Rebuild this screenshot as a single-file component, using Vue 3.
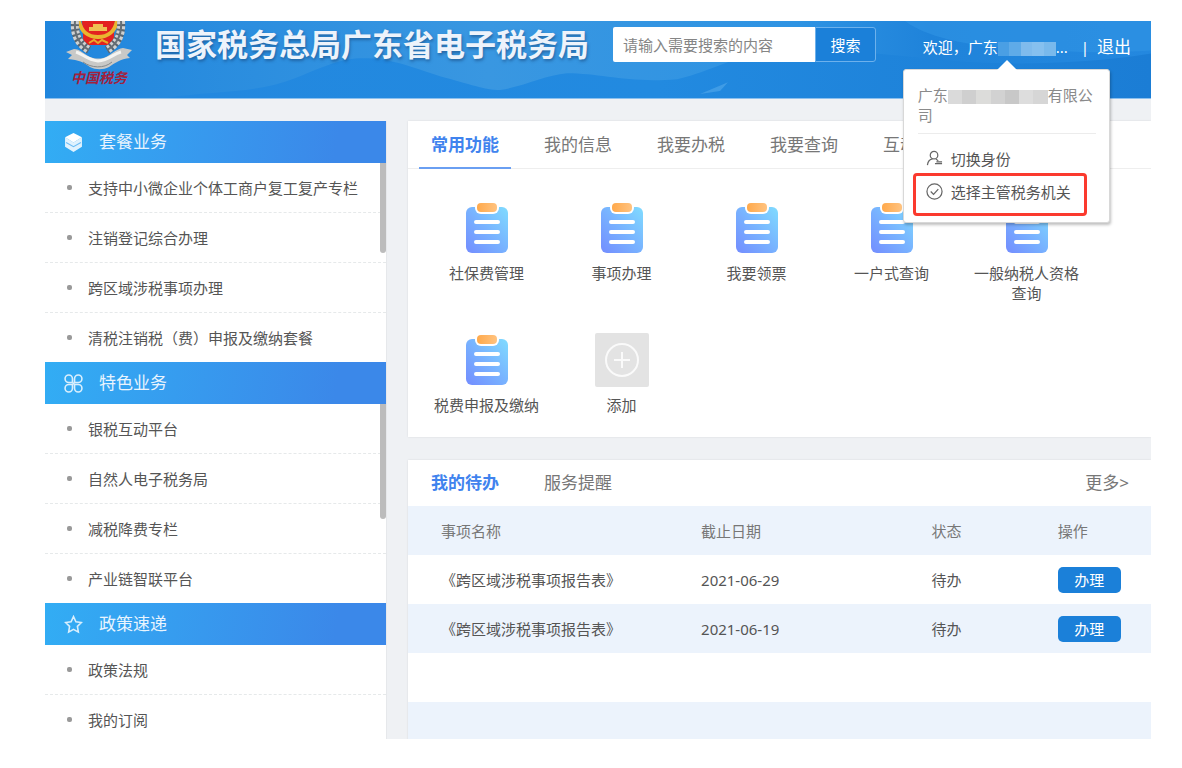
<template>
  <div class="page">
    <div class="portal">
      <header class="header">
        <svg class="header-bg" viewBox="0 0 1106 78" preserveAspectRatio="none" aria-hidden="true">
          <defs>
            <linearGradient id="sky" x1="0" y1="0" x2="1" y2="0">
              <stop offset="0" stop-color="#2086dd" />
              <stop offset="0.4" stop-color="#3997e1" />
              <stop offset="0.68" stop-color="#2e93e3" />
              <stop offset="0.8" stop-color="#1f83da" />
              <stop offset="1" stop-color="#2488df" />
            </linearGradient>
            <linearGradient id="ridge" x1="0" y1="0" x2="1" y2="0">
              <stop offset="0" stop-color="#2388df" />
              <stop offset="0.5" stop-color="#228ae0" />
              <stop offset="1" stop-color="#1b7dd5" />
            </linearGradient>
          </defs>
          <rect width="1106" height="78" fill="url(#sky)" />
          <path d="M860 0h246v30c-60 4-90 0-130-2s-90-8-116-28z" fill="#3094e4" opacity=".6" />
          <path d="M120 78c50-8 90-4 130-20 20-8 40-18 60-20 30-2 50 6 85 18 30 8 45 14 60 14 25-4 45-15 67-17 35 0 60 10 110 6 40-10 50-22 90-26 60-6 110 0 170 6s140 6 214-6v45z" fill="url(#ridge)" />
          <path d="M655 74l28-12-8 9z" fill="#5eafee" opacity=".5" />
        </svg>
        <div class="brand">
          <svg class="emblem" viewBox="0 0 68 49" aria-hidden="true">
            <path d="M17 0h33l-1 15c0 6-2 9-4 9H22c-3 0-4-4-4-9z" fill="#e3211f" />
            <path d="M14 0c2 10 9 16 19 16s17-6 19-16" fill="none" stroke="#e9b52f" stroke-width="4" />
            <path d="M24 10v-4h4v-3h10v3h4v4z" fill="#efc052" />
            <path d="M24 22l5-3 4 3 4-3 6 3" fill="none" stroke="#e9a92a" stroke-width="2" />
            <path d="M10 0c-1 12 2 22 14 29M56 0c1 12-2 22-14 29" fill="none" stroke="#5a6670" stroke-width="8" />
            <path d="M10 0c-1 12 2 22 14 29M56 0c1 12-2 22-14 29" fill="none" stroke="#cfd1d1" stroke-width="8" stroke-dasharray="3 2" />
            <path d="M10 0c-1 12 2 22 14 29M56 0c1 12-2 22-14 29" fill="none" stroke="#666f75" stroke-width="2" />
            <path d="M1 31l8-3c6 0 10 5 16 8 6 2 11 2 16 0 6-3 10-8 17-9l9 2-5 5 3 3c-10 1-15 5-21 9-6 3-13 3-19 0-7-5-11-7-22-8l4-4z" fill="#c9c9c7" />
            <path d="M11 31c7 2 11 8 22 9 11-1 15-7 23-9" fill="none" stroke="#f4f4f2" stroke-width="3" />
            <path d="M18 41c8 6 21 7 29 0" fill="none" stroke="#85898b" stroke-width="1" />
          </svg>
          <span class="brand-name">中国税务</span>
        </div>
        <h1 class="title">国家税务总局广东省电子税务局</h1>
        <form class="search" @submit.prevent>
          <input v-model="keyword" type="text" placeholder="请输入需要搜索的内容" aria-label="搜索内容" />
          <button type="submit">搜索</button>
        </form>
        <div class="user">
          <div class="account">
            <button class="account-btn" type="button" @click="menuOpen = !menuOpen">
              欢迎，广东<span class="mask mask-blue"><i v-for="c in blueMask" :key="c" :style="{ background: c }"></i></span>...
            </button>
            <div v-show="menuOpen" class="dropdown">
              <p class="company">广东<span class="mask mask-gray"><i v-for="c in grayMask" :key="c" :style="{ background: c }"></i></span>有限公司</p>
              <ul class="menu">
                <li>
                  <button type="button">
                    <svg viewBox="0 0 18 18" aria-hidden="true">
                      <circle cx="8.5" cy="5.5" r="4" />
                      <path d="M1.500 16c.5-4 2.500-6 5.500-6.500M10.500 9.500l2.500 2M9.500 14.500h7.500M11 12.500h6" />
                    </svg>
                    切换身份
                  </button>
                </li>
                <li class="marked">
                  <button type="button">
                    <svg viewBox="0 0 18 18" aria-hidden="true">
                      <circle cx="9" cy="9" r="8" />
                      <path d="M5 9l3 3 5-5.500" />
                    </svg>
                    选择主管税务机关
                  </button>
                </li>
              </ul>
            </div>
          </div>
          <span class="bar">|</span>
          <a class="logout" href="#">退出</a>
        </div>
      </header>

      <div class="body">
        <aside class="sidebar">
          <section v-for="group in groups" :key="group.title" class="group">
            <h2>
              <svg v-if="group.icon === 'cube'" viewBox="0 0 18 18" aria-hidden="true">
                <path d="M9 0l8 4-8 5-8-5z" fill="#fff" />
                <path d="M1 4l8 5 8-5v9l-8 5-8-5z" fill="#fff" opacity=".85" />
                <path d="M2 9l7 4 7-4" fill="none" stroke="#6bbcf5" stroke-width="1" />
              </svg>
              <svg v-else-if="group.icon === 'clover'" viewBox="0 0 18 18" aria-hidden="true">
                <path d="M8 8H4.500A3.500 3.500 0 1 1 8 4.500zM10 8V4.500A3.500 3.500 0 1 1 13.500 8zM8 10v3.500A3.500 3.500 0 1 1 4.500 10zM10 10h3.500a3.500 3.500 0 1 1-3.500 3.500zM8 8l2 2M10 8l-2 2" class="line" />
              </svg>
              <svg v-else viewBox="0 0 18 18" aria-hidden="true">
                <path d="M9 1.500l2.300 4.900 5.200.7-3.800 3.700.9 5.400L9 13.600l-4.600 2.600.9-5.400L1.500 7.100l5.200-.7z" class="line" />
              </svg>
              {{ group.title }}
            </h2>
            <ul>
              <li v-for="item in group.items" :key="item"><a href="#">{{ item }}</a></li>
            </ul>
            <span v-if="group.thumb" class="thumb" :style="{ height: group.thumb + 'px' }"></span>
          </section>
        </aside>

        <main class="main">
          <section class="card">
            <nav class="tabs tabs-line">
              <button v-for="tab in tabs" :key="tab" type="button" :class="{ active: tab === activeTab }" @click="activeTab = tab">{{ tab }}</button>
            </nav>
            <div class="shortcuts">
              <button v-for="name in shortcuts" :key="name" type="button" class="shortcut">
                <svg viewBox="0 0 54 54" aria-hidden="true">
                  <defs>
                    <linearGradient id="paper" x1="0" y1="1" x2="1" y2="0">
                      <stop offset="0" stop-color="#738dff" />
                      <stop offset="0.5" stop-color="#78b2ff" />
                      <stop offset="1" stop-color="#80dcff" />
                    </linearGradient>
                    <linearGradient id="clip" x1="0" y1="0" x2="1" y2="0">
                      <stop offset="0" stop-color="#ffa94b" />
                      <stop offset="1" stop-color="#ffc380" />
                    </linearGradient>
                  </defs>
                  <rect x="6" y="6" width="42" height="46" rx="6" fill="url(#paper)" />
                  <rect x="15" y="0" width="24" height="13" rx="6" fill="#fff" />
                  <rect x="17" y="2" width="20" height="9" rx="4" fill="url(#clip)" />
                  <path d="M16 21h22M16 31h22M16 41h22" stroke="#fff" stroke-width="4" stroke-linecap="round" />
                </svg>
                <span>{{ name }}</span>
              </button>
              <button type="button" class="shortcut">
                <svg viewBox="0 0 54 54" aria-hidden="true">
                  <rect width="54" height="54" rx="2" fill="#e3e3e3" />
                  <circle cx="27" cy="27" r="16" fill="none" stroke="#fafafa" stroke-width="2" />
                  <path d="M27 19v16M19 27h16" stroke="#fafafa" stroke-width="2" />
                </svg>
                <span>添加</span>
              </button>
            </div>
          </section>

          <section class="card todo">
            <div class="todo-head">
              <nav class="tabs">
                <button type="button" class="active">我的待办</button>
                <button type="button">服务提醒</button>
              </nav>
              <a class="more" href="#">更多&gt;</a>
            </div>
            <table>
              <thead>
                <tr>
                  <th class="col-name">事项名称</th>
                  <th class="col-date">截止日期</th>
                  <th class="col-state">状态</th>
                  <th>操作</th>
                </tr>
              </thead>
              <tbody>
                <tr v-for="row in todos" :key="row.date">
                  <td>{{ row.name }}</td>
                  <td>{{ row.date }}</td>
                  <td>{{ row.state }}</td>
                  <td><button type="button" class="handle">办理</button></td>
                </tr>
                <tr v-for="n in 2" :key="n">
                  <td colspan="4"></td>
                </tr>
              </tbody>
            </table>
          </section>
        </main>
      </div>
    </div>
  </div>
</template>

<script setup>
import { ref } from 'vue'

const keyword = ref('')
const menuOpen = ref(true)
const activeTab = ref('常用功能')

const tabs = ['常用功能', '我的信息', '我要办税', '我要查询', '互动中心']

// colours of the blocks that hide the company name
const blueMask = ['#4a9fe4', '#5fabe8', '#7fbbed', '#86c0ef', '#79b9ec']
const grayMask = ['#dadada', '#cfcfcf', '#dcdcda', '#d2d2d2', '#c8c8c8', '#dddddd', '#d6d6d6']

const groups = [
  {
    title: '套餐业务',
    icon: 'cube',
    thumb: 90,
    items: ['支持中小微企业个体工商户复工复产专栏', '注销登记综合办理', '跨区域涉税事项办理', '清税注销税（费）申报及缴纳套餐']
  },
  {
    title: '特色业务',
    icon: 'clover',
    thumb: 115,
    items: ['银税互动平台', '自然人电子税务局', '减税降费专栏', '产业链智联平台']
  },
  {
    title: '政策速递',
    icon: 'star',
    items: ['政策法规', '我的订阅']
  }
]

const shortcuts = ['社保费管理', '事项办理', '我要领票', '一户式查询', '一般纳税人资格查询', '税费申报及缴纳']

const todos = [
  { name: '《跨区域涉税事项报告表》', date: '2021-06-29', state: '待办' },
  { name: '《跨区域涉税事项报告表》', date: '2021-06-19', state: '待办' }
]
</script>

<style>
body {
  margin: 0;
  background: #fff;
}
</style>

<style scoped>
* {
  box-sizing: border-box;
}

.page {
  height: 100vh;
  padding: 21px 31px 29px 45px;
  font-family: "Noto Sans", "Noto Sans CJK SC", sans-serif;
  font-size: 15px;
  line-height: 20px;
  color: #555;
}

.portal {
  height: 100%;
  overflow: hidden;
  display: flex;
  flex-direction: column;
  background: #eff1f4;
}

button {
  font: inherit;
  color: inherit;
  background: none;
  border: none;
  padding: 0;
  cursor: pointer;
}

a {
  color: inherit;
  text-decoration: none;
}

ul {
  list-style: none;
  margin: 0;
  padding: 0;
}

/* header */
.header {
  position: relative;
  z-index: 2;
  flex: none;
  display: flex;
  align-items: flex-start;
  height: 78px;
  padding: 0 20px;
  border-bottom: 1px solid #8cc0ee;
  color: #fff;
}

.header-bg {
  position: absolute;
  inset: 0;
  z-index: -1;
  width: 100%;
  height: 100%;
}

.brand {
  display: flex;
  flex-direction: column;
  align-items: center;
  width: 68px;
}

.emblem {
  width: 68px;
  height: 49px;
}

.brand-name {
  color: #a3203c;
  font-size: 14px;
  line-height: 16px;
  font-weight: bold;
  font-style: italic;
}

.title {
  margin: 6px 0 0 22px;
  font-size: 31px;
  line-height: 35px;
  font-weight: bold;
  white-space: nowrap;
  color: #edf3fb;
  text-shadow: 1px 2px 3px rgba(20, 60, 110, 0.5);
}

.search {
  display: flex;
  height: 35px;
  margin: 6px 0 0 24px;
}

.search input {
  width: 202px;
  padding: 0 10px;
  border: none;
  border-radius: 2px 0 0 2px;
  background: #fff;
  font: inherit;
  color: #555;
}

.search input::placeholder {
  color: #858585;
}

.search button {
  width: 61px;
  border: 1px solid #6db1ec;
  border-radius: 0 3px 3px 0;
  background: #1b80d9;
}

.user {
  display: flex;
  margin: 6px 0 0 auto;
  line-height: 40px;
  white-space: nowrap;
}

.account {
  position: relative;
}

.mask {
  display: inline-flex;
  height: 14px;
  vertical-align: middle;
}

.mask i {
  flex: 1;
}

.mask-blue {
  width: 58px;
}

.mask-gray {
  width: 100px;
}

.bar {
  margin: 0 8px 0 13px;
}

.logout {
  font-size: 17px;
}

.dropdown {
  position: absolute;
  top: 42px;
  left: -20px;
  width: 207px;
  padding: 15px 13px 14px 14px;
  border: 1px solid #d8d8d8;
  border-radius: 3px;
  background: #fff;
  box-shadow: 1px 2px 3px rgba(0, 0, 0, 0.25);
  color: #555;
  line-height: 20px;
  white-space: normal;
}

.dropdown::before {
  content: "";
  position: absolute;
  top: -10px;
  left: 93px;
  border: 10px solid transparent;
  border-top: none;
  border-bottom-color: #fff;
}

.company {
  margin: 0 0 8px;
  padding-bottom: 8px;
  border-bottom: 1px solid #ececec;
  color: #8a8a8a;
  word-break: break-all;
}

.menu li {
  position: relative;
}

.menu button {
  display: flex;
  align-items: center;
  gap: 8px;
  height: 33px;
  padding-left: 8px;
}

.menu svg {
  width: 17px;
  height: 17px;
  fill: none;
  stroke: #666;
  stroke-width: 1.3;
}

.marked::after {
  content: "";
  position: absolute;
  inset: -2px 9px -8px -5px;
  border: 3px solid #fb3a2e;
  border-radius: 4px;
  pointer-events: none;
}

/* body */
.body {
  display: flex;
  align-items: flex-start;
  gap: 21px;
  padding-top: 22px;
}

.sidebar {
  flex: none;
  width: 342px;
  border-right: 1px solid #e6e8eb;
  background: #fff;
}

.group {
  position: relative;
}

.group h2 {
  display: flex;
  align-items: center;
  gap: 16px;
  height: 42px;
  margin: 0;
  padding-left: 19px;
  background: linear-gradient(100deg, #32adf4, #3b88e9 85%);
  color: #e8f4fe;
  font-size: 17px;
  font-weight: normal;
}

.group h2 svg {
  width: 19px;
  height: 19px;
}

.line {
  fill: none;
  stroke: #d9effd;
  stroke-width: 1.5;
}

.group li {
  height: 50px;
  border-bottom: 1px dashed #e6e9ea;
}

.group li:last-child {
  height: 49px;
  border-bottom: none;
}

.group li a {
  display: flex;
  align-items: center;
  gap: 16px;
  height: 49px;
  padding-left: 22px;
}

.group li a::before {
  content: "";
  width: 5px;
  height: 5px;
  border-radius: 2px;
  background: #999;
}

.thumb {
  position: absolute;
  top: 42px;
  right: 0;
  width: 6px;
  border-radius: 0 0 3px 3px;
  background: #bcbcbc;
}

.main {
  flex: 1;
  min-width: 0;
  display: flex;
  flex-direction: column;
  gap: 23px;
}

.card {
  background: #fff;
  box-shadow: 0 0 2px rgba(0, 0, 0, 0.1);
}

.tabs {
  display: flex;
  gap: 21px;
  padding-left: 11px;
}

.tabs button {
  height: 48px;
  padding: 0 12px;
  font-size: 17px;
  color: #777;
}

.tabs-line {
  border-bottom: 1px solid #eee;
}

.tabs-line button {
  margin-bottom: -1px;
  border-top: 2px solid transparent;
  border-bottom: 2px solid transparent;
}

.tabs .active {
  color: #4083ee;
  font-weight: bold;
}

.tabs-line .active {
  border-bottom-color: #6a9ff2;
}

.shortcuts {
  display: flex;
  flex-wrap: wrap;
  align-items: flex-start;
  row-gap: 30px;
  padding: 32px 11px 22px;
}

.shortcut {
  display: flex;
  flex-direction: column;
  align-items: center;
  gap: 8px;
  width: 135px;
  padding: 0 12px;
}

.shortcut svg {
  width: 54px;
  height: 54px;
}

.todo-head {
  display: flex;
  justify-content: space-between;
  align-items: center;
  height: 46px;
}

.more {
  margin-right: 22px;
  font-size: 17px;
  color: #777;
}

table {
  width: 100%;
  table-layout: fixed;
  border-collapse: collapse;
}

.col-name {
  width: 35%;
}

.col-date {
  width: 31%;
}

.col-state {
  width: 17%;
}

th,
td {
  height: 49px;
  padding: 0 0 0 33px;
  text-align: left;
}

th {
  background: #ecf3fc;
  color: #777;
  font-weight: normal;
}

tbody tr:nth-child(even) {
  background: #ecf3fc;
}

.handle {
  width: 63px;
  height: 26px;
  border-radius: 5px;
  background: #1b80d9;
  color: #fff;
}
</style>
